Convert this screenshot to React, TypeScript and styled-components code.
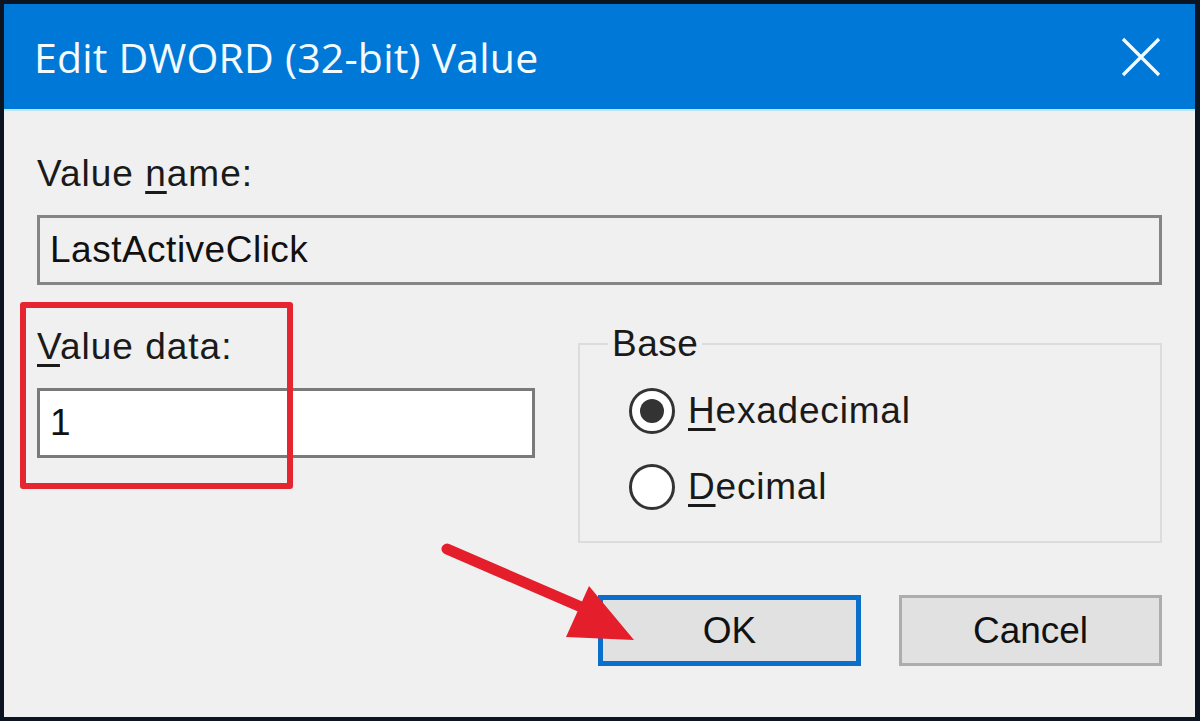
import styled, { createGlobalStyle } from "styled-components";

const GlobalStyle = createGlobalStyle`
  html, body {
    margin: 0;
    padding: 0;
    background: #0b1522;
  }
  * { box-sizing: border-box; }
`;

const Frame = styled.div`
  position: relative;
  width: 1200px;
  height: 721px;
  display: flex;
  flex-direction: column;
  border-style: solid;
  border-color: #0b1522;
  border-width: 4px 5px 4px 4px;
  background: #f0f0f0;
  overflow: hidden;
  font-family: "Liberation Sans", Arial, sans-serif;
  color: #111;
`;

const TitleBar = styled.div`
  height: 107px;
  flex: none;
  display: flex;
  align-items: center;
  justify-content: space-between;
  padding: 0 34px 0 30px;
  background: #0078d7;
  border-bottom: 2px solid #bfe6fb;
`;

const Title = styled.div`
  font-family: "Open Sans", "Noto Sans", sans-serif;
  font-size: 41px;
  letter-spacing: 0.2px;
  color: #f4fbff;
`;

const Body = styled.div`
  flex: 1;
  display: flex;
  flex-direction: column;
  padding: 41px 33px 0 33px;
`;

const Label = styled.div`
  font-size: 37px;
  line-height: 44px;
  height: 44px;
  letter-spacing: 1px;
  color: #1a1a1a;

  u {
    text-decoration-thickness: 3px;
    text-underline-offset: 5px;
  }
`;

const TextBox = styled.div<{ $readOnly?: boolean; $width?: number }>`
  width: ${({ $width }) => ($width ? `${$width}px` : "100%")};
  height: 70px;
  display: flex;
  align-items: center;
  padding-left: 10px;
  border: 3px solid ${({ $readOnly }) => ($readOnly ? "#858585" : "#7a7a7a")};
  background: ${({ $readOnly }) => ($readOnly ? "#f0f0f0" : "#ffffff")};
  font-size: 37px;
  letter-spacing: 0.5px;
  color: #111;
`;

const NameBox = styled(TextBox)`
  margin-top: 19px;
`;

const DataRow = styled.div`
  display: flex;
  align-items: flex-start;
  margin-top: 40px;
`;

const DataColumn = styled.div`
  position: relative;
  width: 498px;
  display: flex;
  flex-direction: column;
  gap: 19px;
`;

const Highlight = styled.div`
  position: absolute;
  left: -17px;
  top: -23px;
  width: 273px;
  height: 187px;
  border: 6px solid #e52630;
  border-radius: 3px;
  pointer-events: none;
`;

const GroupBox = styled.fieldset`
  flex: 1;
  margin: -3px 0 0 43px;
  padding: 17px 0 0 49px;
  height: 221px;
  border: 2px solid #dcdcdc;
  display: flex;
  flex-direction: column;
  gap: 20px;
`;

const Legend = styled.legend`
  font-size: 37px;
  line-height: 44px;
  padding: 0 4px;
  margin-left: -21px;
  letter-spacing: 0.5px;
  color: #1a1a1a;
`;

const RadioRow = styled.label`
  display: flex;
  align-items: center;
  gap: 13px;
  font-size: 37px;
  line-height: 56px;
  letter-spacing: 0.8px;
  color: #1a1a1a;

  u {
    text-decoration-thickness: 3px;
    text-underline-offset: 5px;
  }
`;

const RadioCircle = styled.span<{ $checked?: boolean }>`
  width: 46px;
  height: 46px;
  border-radius: 50%;
  border: 3px solid #333;
  background: #fff;
  display: flex;
  align-items: center;
  justify-content: center;

  &::after {
    content: "";
    width: 24px;
    height: 24px;
    border-radius: 50%;
    background: ${({ $checked }) => ($checked ? "#333" : "transparent")};
  }
`;

const ButtonRow = styled.div`
  display: flex;
  justify-content: flex-end;
  gap: 38px;
  margin-top: 52px;
`;

const Button = styled.button<{ $default?: boolean }>`
  width: 263px;
  height: 71px;
  font-family: "Liberation Sans", Arial, sans-serif;
  font-size: 37px;
  color: #111;
  background: #e1e1e1;
  border: ${({ $default }) => ($default ? "5px solid #0a6fcb" : "3px solid #adadad")};
  padding: 0;
`;

const Arrow = styled.svg`
  position: absolute;
  left: 0;
  top: 0;
  pointer-events: none;
`;

export default function App() {
  return (
    <>
      <GlobalStyle />
      <Frame>
        <TitleBar>
          <Title>Edit DWORD (32-bit) Value</Title>
          <svg width="40" height="40" viewBox="0 0 40 40">
            <path d="M2 2 L38 38 M38 2 L2 38" stroke="#f4fbff" strokeWidth="3.2" />
          </svg>
        </TitleBar>
        <Body>
          <Label>
            Value <u>n</u>ame:
          </Label>
          <NameBox $readOnly>LastActiveClick</NameBox>
          <DataRow>
            <DataColumn>
              <Highlight />
              <Label>
                <u>V</u>alue data:
              </Label>
              <TextBox $width={498}>1</TextBox>
            </DataColumn>
            <GroupBox>
              <Legend>Base</Legend>
              <RadioRow>
                <RadioCircle $checked />
                <span>
                  <u>H</u>exadecimal
                </span>
              </RadioRow>
              <RadioRow>
                <RadioCircle />
                <span>
                  <u>D</u>ecimal
                </span>
              </RadioRow>
            </GroupBox>
          </DataRow>
          <ButtonRow>
            <Button $default>OK</Button>
            <Button>Cancel</Button>
          </ButtonRow>
        </Body>
        <Arrow width="1200" height="721" viewBox="0 0 1200 721">
          <line x1="443" y1="545" x2="598" y2="612" stroke="#e41e2b" strokeWidth="11" strokeLinecap="round" />
          <polygon points="585,582 562,633 630,636" fill="#e41e2b" />
        </Arrow>
      </Frame>
    </>
  );
}
